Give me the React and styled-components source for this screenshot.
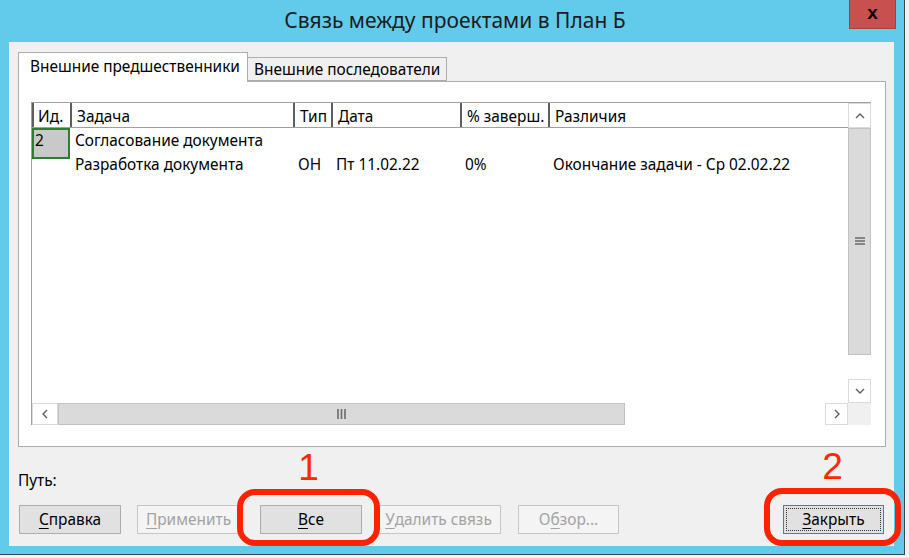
import React from "react";
import styled, { createGlobalStyle } from "styled-components";

const GlobalStyle = createGlobalStyle`
  html, body {
    margin: 0;
    padding: 0;
    background: #f2f2f2;
  }
  body {
    font-family: "Noto Sans", "Liberation Sans", sans-serif;
    color: #000;
  }
`;

const FONT = "15.4px";

const columns = [
  { title: "Ид.", width: "38px" },
  { title: "Задача", width: "223px" },
  { title: "Тип", width: "38px" },
  { title: "Дата", width: "129px" },
  { title: "% заверш.", width: "88px" },
  { title: "Различия", width: "1fr" },
];

const rows = [
  { id: "2", cells: ["Согласование документа", "", "", "", ""] },
  { id: "", cells: ["Разработка документа", "ОН", "Пт 11.02.22", "0%", "Окончание задачи - Ср 02.02.22"] },
];

const Chevron = ({ dir }) => {
  const d = {
    up: "M1 6 L5 2 L9 6",
    down: "M1 2 L5 6 L9 2",
    left: "M6 1 L2 5 L6 9",
    right: "M2 1 L6 5 L2 9",
  }[dir];
  const horizontal = dir === "left" || dir === "right";
  return (
    <svg width={horizontal ? 8 : 10} height={horizontal ? 10 : 8} viewBox={horizontal ? "0 0 8 10" : "0 0 10 8"}>
      <path d={d} fill="none" stroke="#606060" strokeWidth="1.4" />
    </svg>
  );
};

const App = () => {
  return (
    <>
      <GlobalStyle />
      <Window>
        <TitleBar>
          <span />
          <Title>Связь между проектами в План Б</Title>
          <Close>x</Close>
        </TitleBar>
        <Body>
          <TabStrip>
            <Tab $active>Внешние предшественники</Tab>
            <Tab>Внешние последователи</Tab>
          </TabStrip>
          <Panel>
            <Grid>
              <Data>
                <Row $header>
                  {columns.map((c) => (
                    <HeadCell key={c.title}>{c.title}</HeadCell>
                  ))}
                </Row>
                {rows.map((r, i) => (
                  <Row key={i}>
                    <IdCell $selected={i === 0}>{r.id}</IdCell>
                    {r.cells.map((c, j) => (
                      <Cell key={j}>{c}</Cell>
                    ))}
                  </Row>
                ))}
              </Data>
              <VScroll>
                <ArrowBtn $h={25}>
                  <Chevron dir="up" />
                </ArrowBtn>
                <VThumb>
                  <svg width="10" height="9" viewBox="0 0 10 9">
                    <path d="M0 1h10M0 4h10M0 7h10" stroke="#6a6a6a" strokeWidth="1.4" />
                  </svg>
                </VThumb>
                <Track />
                <ArrowBtn $h={24}>
                  <Chevron dir="down" />
                </ArrowBtn>
              </VScroll>
              <HScroll>
                <ArrowBtn $w={26}>
                  <Chevron dir="left" />
                </ArrowBtn>
                <HThumb>
                  <svg width="10" height="10" viewBox="0 0 10 10">
                    <path d="M1 0v10M4.5 0v10M8 0v10" stroke="#6a6a6a" strokeWidth="1.6" />
                  </svg>
                </HThumb>
                <Track />
                <ArrowBtn $w={23}>
                  <Chevron dir="right" />
                </ArrowBtn>
              </HScroll>
              <Corner />
            </Grid>
          </Panel>
          <PathLabel>Путь:</PathLabel>
          <ButtonRow>
            <Button $w={102}>
              <u>С</u>правка
            </Button>
            <Button $w={103} $gap={16} disabled>
              <u>П</u>рименить
            </Button>
            <Marked $gap={20}>
              <Button $w={102}>
                <u>В</u>се
              </Button>
              <Ring $inset="-16px -18px -12px -23px">
                <Mark>1</Mark>
              </Ring>
            </Marked>
            <Button $w={125} $gap={14} disabled>
              <u>У</u>далить связь
            </Button>
            <Button $w={101} $gap={17} disabled>
              О<u>б</u>зор...
            </Button>
            <Marked $push>
              <Button $w={101} $focused>
                <u>З</u>акрыть
              </Button>
              <Ring $inset="-17px -17px -12px -19px">
                <Mark>2</Mark>
              </Ring>
            </Marked>
          </ButtonRow>
        </Body>
      </Window>
    </>
  );
};

export default App;

// Styling

const Window = styled.div`
  width: 904px;
  height: 554px;
  background: #62caeb;
  border-right: 1px solid #3d464b;
  border-bottom: 1px solid #3d464b;
  display: flex;
  flex-direction: column;
`;

const TitleBar = styled.div`
  height: 42px;
  display: grid;
  grid-template-columns: 1fr auto 1fr;
  padding-left: 6px;
`;

const Title = styled.div`
  align-self: center;
  margin-top: -3px;
  font-size: 21px;
  color: #1c1c1c;
`;

const Close = styled.div`
  justify-self: end;
  margin-right: 8px;
  width: 47px;
  height: 29px;
  background: #c8514f;
  border: 1px solid #a8403e;
  border-top: none;
  box-sizing: border-box;
  display: flex;
  align-items: center;
  justify-content: center;
  font-family: "Liberation Sans", Arial, sans-serif;
  font-weight: bold;
  font-size: 19px;
  line-height: 1;
  padding-bottom: 3px;
`;

const Body = styled.div`
  flex: 1;
  margin: 0 10px 8px 9px;
  background: #f0f0f0;
  padding: 10px 8px 12px 9px;
  display: flex;
  flex-direction: column;
`;

const TabStrip = styled.div`
  display: flex;
  align-items: flex-end;
  height: 30px;
  margin-bottom: -1px;
  position: relative;
  z-index: 1;
`;

const Tab = styled.div`
  box-sizing: border-box;
  height: ${(p) => (p.$active ? "30px" : "24px")};
  width: ${(p) => (p.$active ? "230px" : "199px")};
  margin-bottom: ${(p) => (p.$active ? "0" : "1px")};
  padding-left: ${(p) => (p.$active ? "11px" : "6px")};
  padding-bottom: ${(p) => (p.$active ? "2px" : "0")};
  background: ${(p) => (p.$active ? "#fff" : "#f0f0f0")};
  border: 1px solid #adadad;
  border-bottom: ${(p) => (p.$active ? "none" : "1px solid #adadad")};
  border-left: ${(p) => (p.$active ? "1px solid #adadad" : "none")};
  display: flex;
  align-items: center;
  font-size: ${FONT};
  white-space: nowrap;
`;

const Panel = styled.div`
  height: 366px;
  box-sizing: border-box;
  width: 868px;
  background: #fff;
  border: 1px solid #adadad;
  padding: 20px 14px 20px 12px;
`;

const Grid = styled.div`
  height: 323px;
  box-sizing: border-box;
  display: grid;
  grid-template-columns: 1fr 23px;
  grid-template-rows: 1fr 22px;
  border-top: 1px solid #a0a0a0;
  border-left: 1px solid #a0a0a0;
`;

const Data = styled.div`
  background: #fff;
  overflow: hidden;
`;

const Row = styled.div`
  display: grid;
  grid-template-columns: ${columns.map((c) => c.width).join(" ")};
  height: ${(p) => (p.$header ? "24px" : "25px")};
  border-bottom: ${(p) => (p.$header ? "1px solid #a0a0a0" : "none")};
  &:nth-child(2) {
    height: 26px;
  }
`;

const HeadCell = styled.div`
  border-left: 2px solid #5e5e5e;
  padding-left: 5px;
  padding-top: 2px;
  font-size: ${FONT};
  display: flex;
  align-items: center;
  white-space: nowrap;
  &:first-child {
    padding-left: 4px;
  }
`;

const Cell = styled.div`
  padding-left: 5px;
  padding-bottom: 6px;
  font-size: ${FONT};
  display: flex;
  align-items: center;
  white-space: nowrap;
`;

const IdCell = styled.div`
  box-sizing: border-box;
  font-size: ${FONT};
  display: flex;
  align-items: center;
  padding-left: 1px;
  background: ${(p) => (p.$selected ? "#c9c9c9" : "transparent")};
  border: ${(p) => (p.$selected ? "2px solid #2f7d32" : "none")};
  padding-bottom: 6px;
`;

const VScroll = styled.div`
  display: flex;
  flex-direction: column;
  background: #fff;
`;

const HScroll = styled.div`
  display: flex;
  background: #fff;
`;

const ArrowBtn = styled.div`
  box-sizing: border-box;
  ${(p) => (p.$h ? `height: ${p.$h}px;` : "")}
  ${(p) => (p.$w ? `width: ${p.$w}px;` : "")}
  background: #fff;
  border: 1px solid #dadada;
  display: flex;
  align-items: center;
  justify-content: center;
`;

const VThumb = styled.div`
  height: 227px;
  box-sizing: border-box;
  background: #dadada;
  border: 1px solid #c2c2c2;
  display: flex;
  align-items: center;
  justify-content: center;
  padding-bottom: 1px;
`;

const HThumb = styled.div`
  width: 567px;
  box-sizing: border-box;
  background: #dadada;
  border: 1px solid #c2c2c2;
  display: flex;
  align-items: center;
  justify-content: center;
`;

const Track = styled.div`
  flex: 1;
  background: #fff;
`;

const Corner = styled.div`
  background: #f0f0f0;
`;

const PathLabel = styled.div`
  margin-top: 24px;
  height: 20px;
  line-height: 20px;
  font-size: ${FONT};
`;

const ButtonRow = styled.div`
  margin-top: 14px;
  display: flex;
  padding-left: 1px;
  padding-right: 2px;
`;

const Button = styled.div`
  box-sizing: border-box;
  width: ${(p) => p.$w}px;
  height: 29px;
  margin-left: ${(p) => p.$gap || 0}px;
  display: flex;
  align-items: center;
  justify-content: center;
  padding-bottom: 1px;
  font-size: ${FONT};
  white-space: nowrap;
  color: ${(p) => (p.disabled ? "#a3a3a3" : "#000")};
  background: ${(p) => (p.disabled ? "#f4f4f4" : "#e1e1e1")};
  border: 1px solid ${(p) => (p.$focused ? "#3c80c4" : p.disabled ? "#c6c6c6" : "#adadad")};
  outline: ${(p) => (p.$focused ? "1px dotted #333" : "none")};
  outline-offset: -4px;
  u {
    text-decoration-thickness: 1px;
    text-underline-offset: 3px;
  }
`;

const Marked = styled.div`
  position: relative;
  margin-left: ${(p) => (p.$push ? "auto" : `${p.$gap || 0}px`)};
`;

const Ring = styled.div`
  position: absolute;
  inset: ${(p) => p.$inset};
  border: 6px solid #ff2200;
  border-radius: 18px;
  pointer-events: none;
  z-index: 2;
`;

const Mark = styled.div`
  position: absolute;
  bottom: calc(100% + 9px);
  left: 50%;
  transform: translateX(-50%);
  font-family: "Liberation Sans", Arial, sans-serif;
  font-size: 37px;
  line-height: 1;
  color: #ff2a00;
`;
